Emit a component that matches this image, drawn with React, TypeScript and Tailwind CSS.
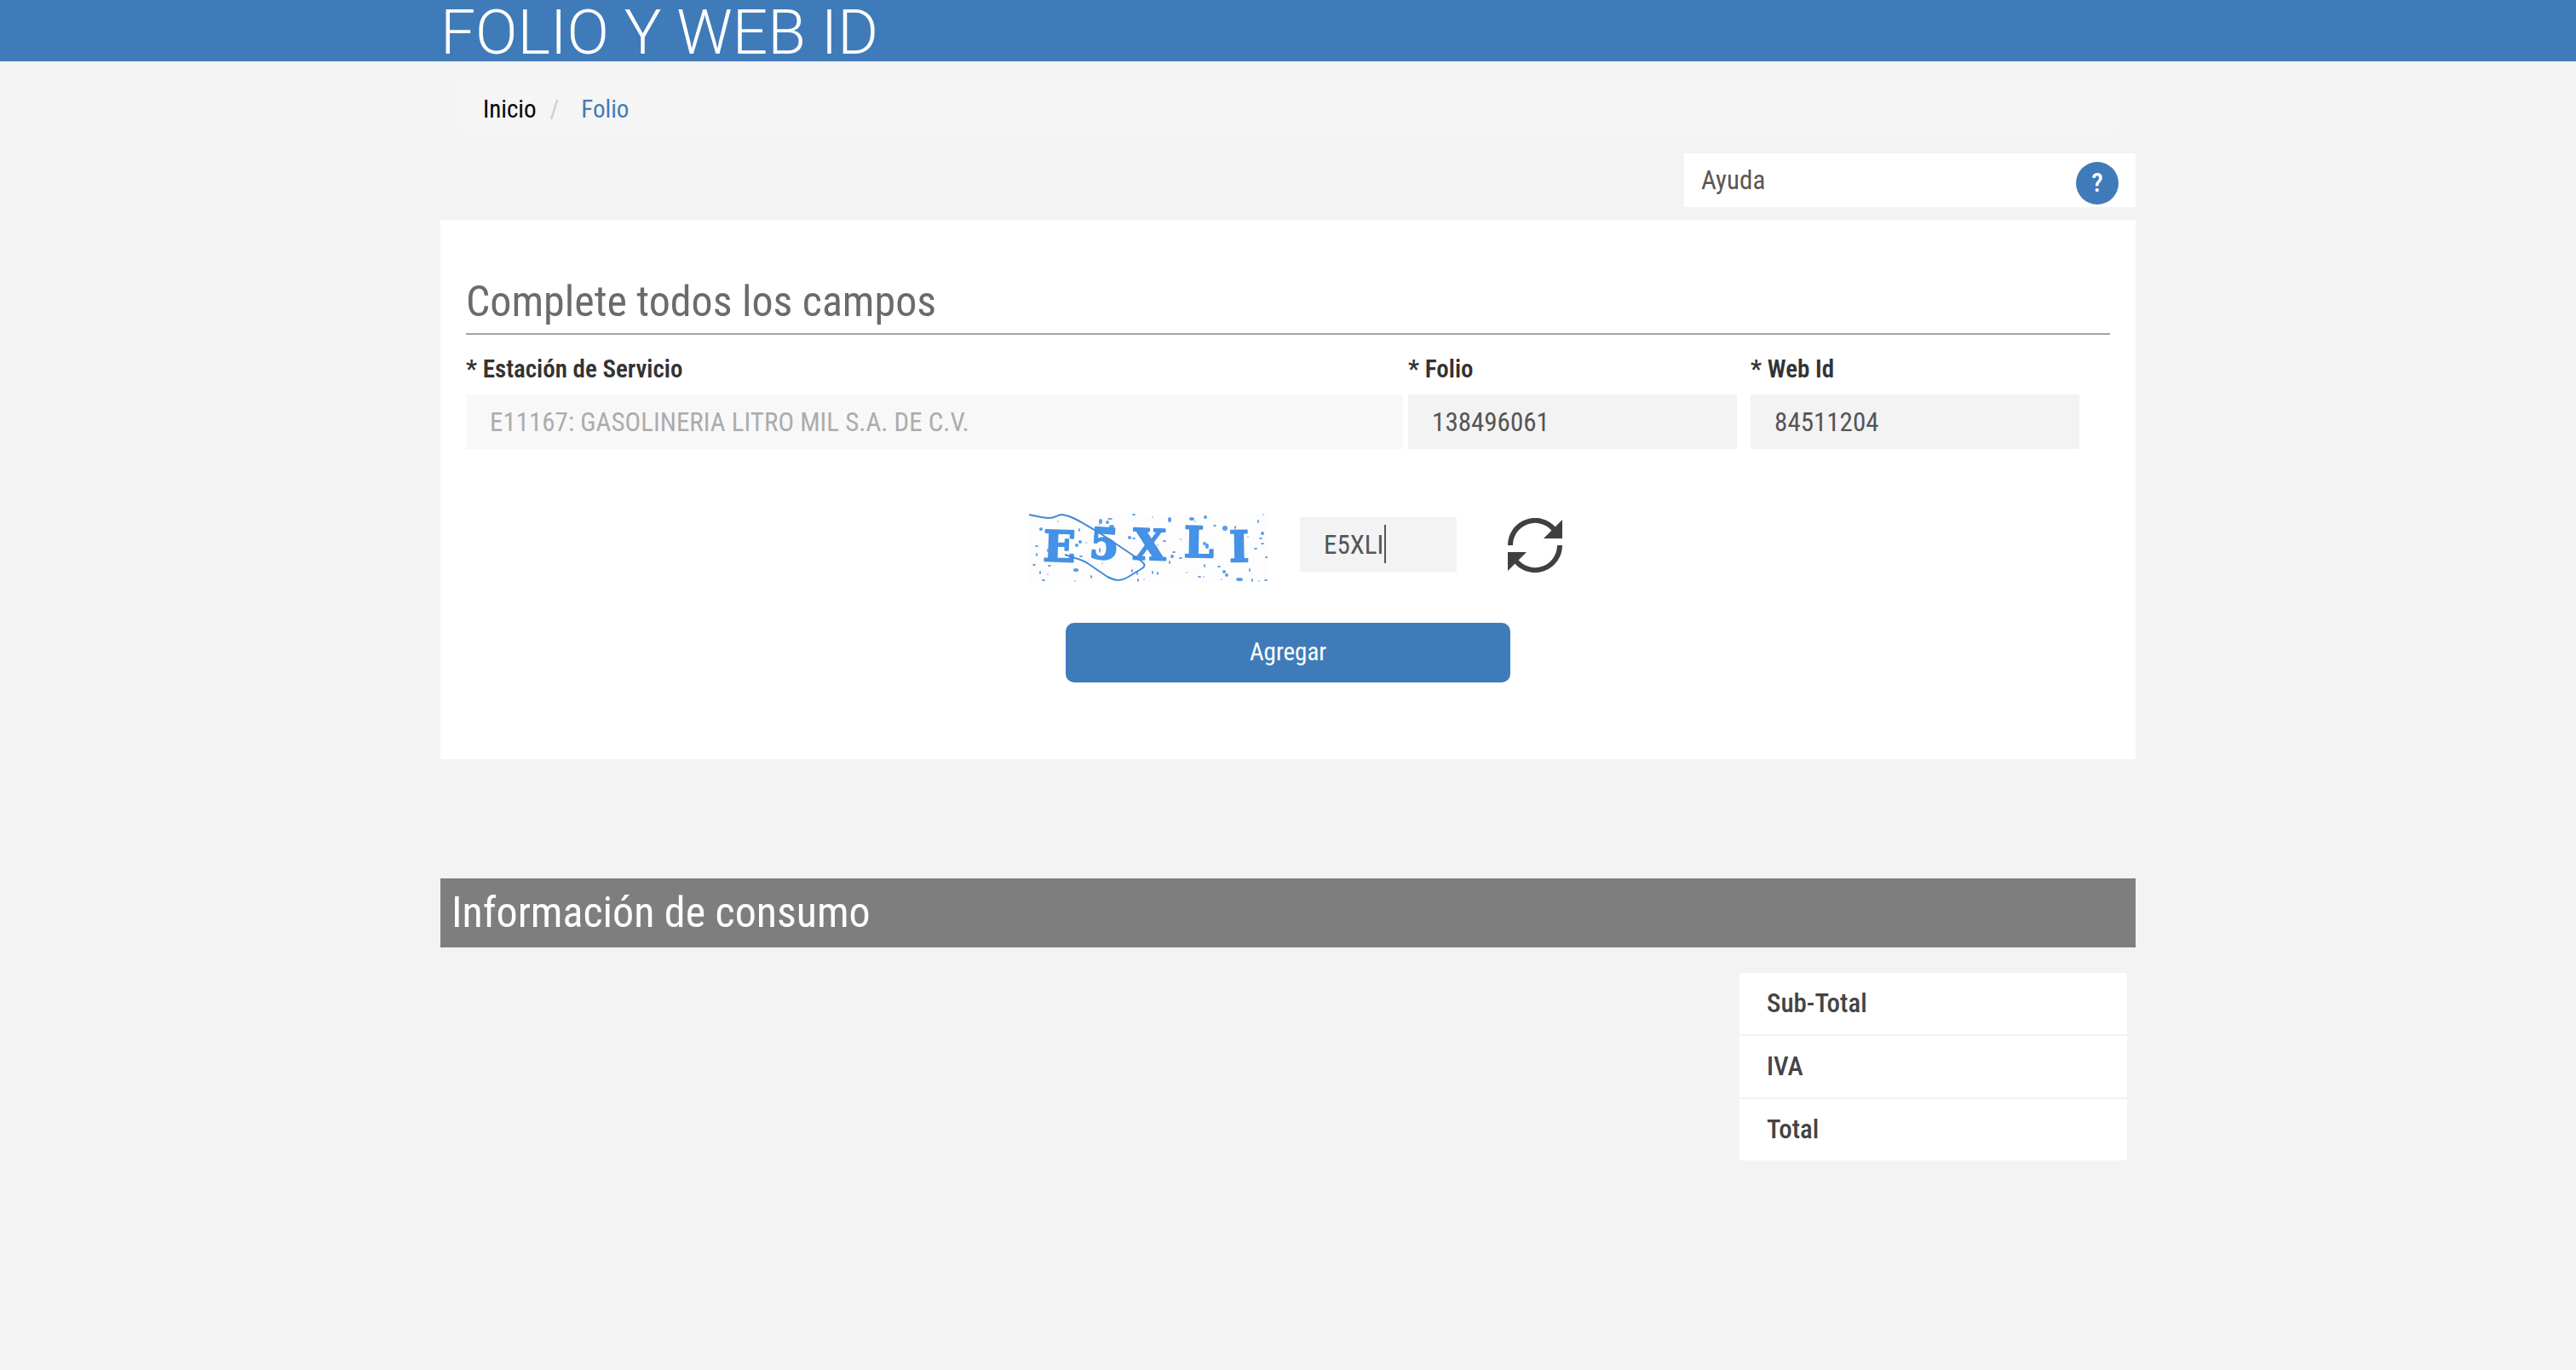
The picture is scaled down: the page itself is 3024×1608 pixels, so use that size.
import { useState } from "react";

const glyphs = [
  { char: "E", x: 35, y: 56, turn: 2 },
  { char: "5", x: 87, y: 53, turn: 4 },
  { char: "X", x: 141, y: 54, turn: 2 },
  { char: "L", x: 199, y: 51, turn: 1 },
  { char: "I", x: 247, y: 56, turn: -1 },
];

// Noise specks of the captcha: x, y, horizontal radius, vertical radius
const specks = [
  [14, 18, 2, 2], [9, 38, 2, 1], [9, 48, 1, 2], [6, 60, 2, 1], [13, 69, 1, 2],
  [24, 61, 2, 1], [34, 9, 1, 1], [22, 43, 1, 2], [22, 71, 1, 1], [17, 78, 2, 1],
  [55, 66, 3, 2], [56, 37, 2, 2], [59, 19, 1, 2], [60, 33, 2, 2], [67, 34, 1, 1],
  [73, 74, 1, 2], [61, 50, 2, 1], [84, 9, 2, 3], [92, 10, 2, 2], [95, 6, 3, 1],
  [97, 15, 3, 2], [82, 13, 1, 1], [83, 43, 1, 3], [86, 58, 1, 1], [54, 79, 1, 1],
  [118, 28, 2, 2], [123, 29, 2, 1], [123, 1, 2, 1], [121, 67, 1, 2], [127, 70, 1, 2],
  [128, 78, 1, 2], [135, 77, 1, 1], [145, 4, 1, 1], [145, 69, 1, 2], [151, 70, 1, 2],
  [151, 37, 1, 1], [159, 32, 2, 1], [165, 7, 2, 3], [168, 50, 2, 2], [170, 45, 2, 1],
  [165, 57, 1, 2], [178, 30, 1, 1], [178, 52, 2, 1], [185, 69, 1, 1], [191, 6, 3, 2],
  [195, 9, 1, 1], [207, 4, 2, 2], [218, 14, 2, 1], [206, 35, 2, 2], [209, 38, 2, 3],
  [200, 74, 2, 1], [205, 74, 1, 1], [206, 61, 1, 2], [223, 62, 2, 1], [229, 68, 2, 2],
  [232, 72, 2, 2], [226, 77, 1, 1], [230, 17, 3, 3], [242, 16, 1, 2], [247, 77, 4, 2],
  [259, 66, 1, 2], [262, 78, 1, 2], [269, 9, 1, 2], [275, 1, 1, 1], [274, 23, 2, 2],
  [272, 29, 2, 1], [266, 41, 2, 1], [274, 35, 2, 1], [279, 51, 2, 1], [248, 31, 1, 2],
  [257, 27, 1, 1], [270, 79, 1, 1], [278, 78, 2, 1],
];

function CaptchaImage() {
  return (
    <svg width="280" height="80" viewBox="0 0 280 80" role="img" aria-label="Captcha" className="bg-[#fdfdfd]">
      <g fill="#4592e6">
        {specks.map(([x, y, rx, ry], i) => (
          <ellipse key={i} cx={x} cy={y} rx={rx} ry={ry} opacity={rx * ry === 1 ? 0.5 : 0.9} />
        ))}
        {glyphs.map(({ char, x, y, turn }) => (
          <text
            key={char}
            x={x}
            y={y}
            textAnchor="middle"
            fontSize="50"
            stroke="#4592e6"
            strokeWidth="2"
            strokeLinejoin="round"
            transform={`rotate(${turn} ${x} ${y})`}
            className="font-['DejaVu_Serif','Liberation_Serif',serif] font-bold"
          >
            {char}
          </text>
        ))}
      </g>
      <path
        d="M0 1C9 3 16 5 24 5C31 5 33 1 39 1C46 2 50 4 54 6C64 11 73 17 82 22L115 44L131 55C136 59 137 61 133 64L115 75C108 79 102 79 92 74L70 59C64 55 58 53 54 52L42 48"
        fill="none"
        stroke="#4189d8"
        strokeWidth="2"
      />
    </svg>
  );
}

function RefreshIcon() {
  return (
    <svg width="64" height="64" viewBox="0 0 64 64" aria-hidden="true">
      <path d="M3 32A29 29 0 0 1 54 13M61 32A29 29 0 0 1 10 51" fill="none" stroke="#404040" strokeWidth="6" />
      <path d="M64 2V24H42ZM0 62V40H22Z" fill="#404040" />
    </svg>
  );
}

const labelClass = "block mt-5 mb-[10px] text-[29px] leading-[40px] font-semibold text-[#333]";
const inputClass = "block w-full h-16 px-7 pt-px text-[31px] outline-none";

export default function App() {
  const [folio, setFolio] = useState("138496061");
  const [webId, setWebId] = useState("84511204");
  const [code, setCode] = useState("E5XLI");

  return (
    <div className="min-h-screen bg-[#f3f3f3] font-['Roboto_Condensed','Roboto',sans-serif] text-[#333]">
      <header className="bg-[#407bb9]">
        <h1 className="mx-auto max-w-[1990px] pt-1 font-['Roboto',sans-serif] text-[73px] leading-[68px] font-light text-white">
          FOLIO Y WEB ID
        </h1>
      </header>

      <main className="mx-auto max-w-[1990px]">
        <nav className="mx-5 mt-5 rounded-lg bg-[#f5f5f5] px-[30px] pt-4 pb-[10px] text-[29px] leading-[40px]">
          <ol className="flex">
            <li><a href="#inicio" className="text-black">Inicio</a></li>
            <li aria-hidden="true" className="ml-4 text-[#ccc]">/</li>
            <li className="ml-[26px]"><a href="#folio" className="text-[#407bb9]">Folio</a></li>
          </ol>
        </nav>

        <div className="mt-[22px] ml-auto flex w-[530px] items-start justify-between bg-white px-5 pt-[10px] pb-[3px]">
          <span className="text-[31px] leading-[44px] text-[#5d5655]">Ayuda</span>
          <button type="button" aria-label="Ayuda" className="size-[50px] rounded-full bg-[#407bb9] text-[31px] font-medium text-white">
            ?
          </button>
        </div>

        <form className="mt-[15px] bg-white px-[30px] pt-[66px] pb-[90px]" onSubmit={(e) => e.preventDefault()}>
          <h2 className="border-b-2 border-[#a5a5a5] pb-[7px] text-[50px] leading-[60px] font-normal text-[#6b6b6b]">
            Complete todos los campos
          </h2>
          <div className="flex">
            <div className="w-[57%]">
              <label htmlFor="station" className={labelClass}>* Estación de Servicio</label>
              <input
                id="station"
                disabled
                value="E11167: GASOLINERIA LITRO MIL S.A. DE C.V."
                className={`${inputClass} bg-[#f8f8f8] text-[#acacac]`}
              />
            </div>
            <div className="ml-[6px] w-1/5">
              <label htmlFor="folio" className={labelClass}>* Folio</label>
              <input id="folio" value={folio} onChange={(e) => setFolio(e.target.value)} className={`${inputClass} bg-[#f3f3f3] text-[#555]`} />
            </div>
            <div className="ml-4 w-1/5">
              <label htmlFor="webid" className={labelClass}>* Web Id</label>
              <input id="webid" value={webId} onChange={(e) => setWebId(e.target.value)} className={`${inputClass} bg-[#f3f3f3] text-[#555]`} />
            </div>
          </div>

          <div className="mt-[76px] flex items-start justify-center pl-[18px]">
            <CaptchaImage />
            <div className="relative mt-1 ml-[38px] w-[184px]">
              <input aria-label="Captcha" value={code} onChange={(e) => setCode(e.target.value)} className={`${inputClass} bg-[#f3f3f3] text-[#555]`} />
              <span className="absolute top-[9px] left-[99px] h-[45px] w-[2px] bg-[#555]" />
            </div>
            <button type="button" aria-label="Actualizar captcha" className="mt-[5px] ml-[60px]">
              <RefreshIcon />
            </button>
          </div>

          <button type="submit" className="mx-auto mt-12 block h-[70px] w-[522px] rounded-[10px] bg-[#407bb9] text-[29px] text-white">
            Agregar
          </button>
        </form>

        <h2 className="mt-[140px] bg-[#7e7e7e] px-[13px] pb-px text-[50px] leading-[80px] font-normal text-white">
          Información de consumo
        </h2>

        <table className="mt-[30px] mr-[10px] ml-auto w-[455px] bg-white text-left text-[31px] leading-[72px] text-[#444]">
          <tbody>
            {["Sub-Total", "IVA", "Total"].map((name) => (
              <tr key={name} className="border-b-2 border-[#f3f3f3] last:border-b-0">
                <th scope="row" className="p-0 pl-8 font-medium">{name}</th>
                <td className="p-0" />
              </tr>
            ))}
          </tbody>
        </table>
      </main>
    </div>
  );
}
